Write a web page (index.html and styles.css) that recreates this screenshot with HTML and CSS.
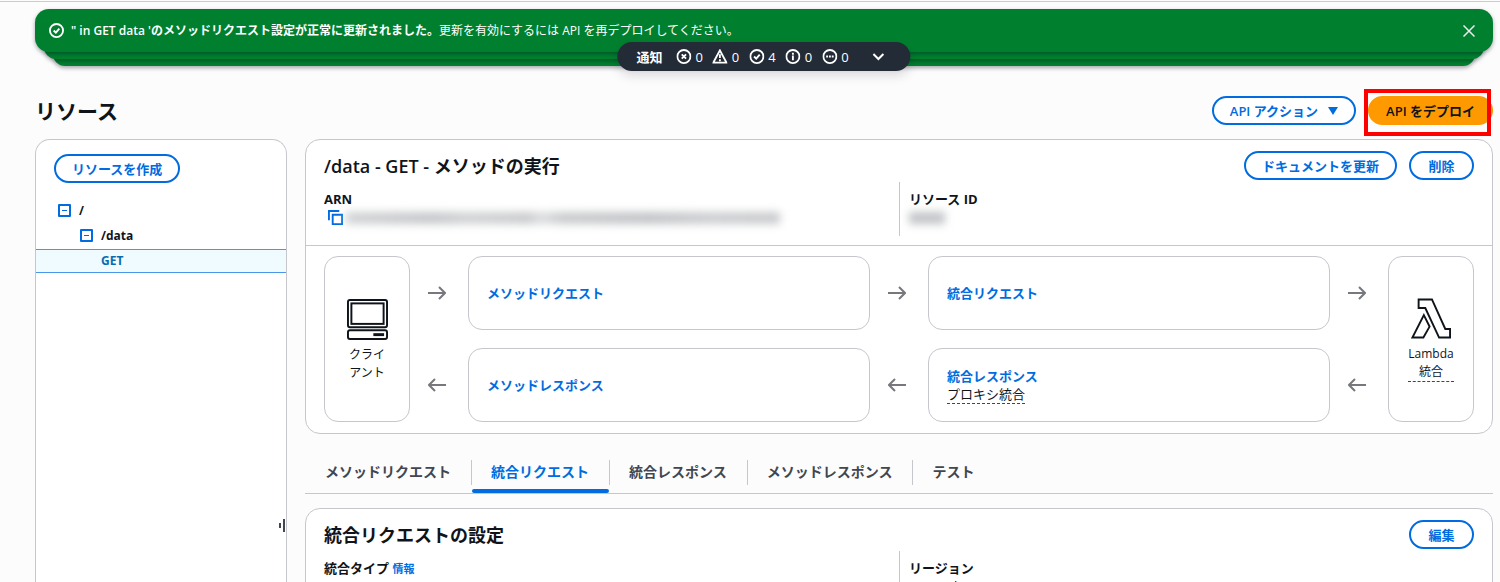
FILE: index.html
```
<!DOCTYPE html>
<html lang="ja">
<head>
  <meta charset="UTF-8">
  <meta name="viewport" content="width=device-width, initial-scale=1.0">
  <title>API Gateway - リソース</title>
  <link rel="stylesheet" href="styles.css">
</head>
<body>
  <div class="flashbar">
    <div class="flash">
      <svg class="icon" viewBox="0 0 16 16"><circle cx="8" cy="8" r="7"/><path d="M5 8l2.3 2.3L11 6"/></svg>
      <p><strong>" in GET data 'のメソッドリクエスト設定が正常に更新されました。</strong>更新を有効にするには API を再デプロイしてください。</p>
      <button class="close" aria-label="閉じる">
        <svg viewBox="0 0 12 12"><path d="M.5.5l11 11M11.5.5l-11 11"/></svg>
      </button>
    </div>
    <div class="flash-layer second"></div>
    <div class="flash-layer third"></div>
    <button class="notifications">
      <strong>通知</strong>
      <span class="counts">
        <span class="count"><svg class="icon" viewBox="0 0 16 16"><circle cx="8" cy="8" r="7"/><path d="M5.7 5.7l4.6 4.6M10.3 5.7l-4.6 4.6"/></svg>0</span>
        <span class="count"><svg class="icon" viewBox="0 0 16 16"><path d="M8 1.5L15 14.5H1zM8 5.5v4M8 11v2"/></svg>0</span>
        <span class="count"><svg class="icon" viewBox="0 0 16 16"><circle cx="8" cy="8" r="7"/><path d="M5 8l2.3 2.3L11 6"/></svg>4</span>
        <span class="count"><svg class="icon" viewBox="0 0 16 16"><circle cx="8" cy="8" r="7"/><path d="M8 7v5M8 4v2"/></svg>0</span>
        <span class="count"><svg class="icon" viewBox="0 0 16 16"><circle cx="8" cy="8" r="7"/><path d="M4 8h2M7 8h2M10 8h2"/></svg>0</span>
      </span>
      <svg class="chevron" viewBox="0 0 12 8"><path d="M1 1l5 5 5-5"/></svg>
    </button>
  </div>

  <header class="page-header">
    <h1>リソース</h1>
    <div class="actions">
      <button class="btn">API アクション <svg class="caret" viewBox="0 0 10 8"><path d="M0 0h10L5 8z"/></svg></button>
      <div class="highlight"><button class="btn primary">API をデプロイ</button></div>
    </div>
  </header>

  <div class="layout">
    <aside class="sidebar">
      <button class="btn create">リソースを作成</button>
      <ul class="tree">
        <li class="root">
          <button class="toggle" aria-label="/ を折りたたむ"></button>/
        </li>
        <li class="child">
          <button class="toggle" aria-label="/data を折りたたむ"></button>/data
        </li>
        <li class="selected"><a href="#get">GET</a></li>
      </ul>
      <div class="resize-handle"></div>
    </aside>

    <main class="content">
      <section class="panel">
        <div class="panel-header">
          <h2>/data - GET - メソッドの実行</h2>
          <div class="actions">
            <button class="btn">ドキュメントを更新</button>
            <button class="btn">削除</button>
          </div>
        </div>
        <div class="details">
          <div class="detail">
            <h3>ARN</h3>
            <div class="arn">
              <button class="copy" aria-label="ARN をコピー">
                <svg viewBox="0 0 16 16"><path d="M1 11V1h11"/><path d="M5 5h10v10H5z"/></svg>
              </button>
              <div class="masked"></div>
            </div>
          </div>
          <div class="detail">
            <h3>リソース ID</h3>
            <div class="masked short"></div>
          </div>
        </div>
        <div class="flow">
          <div class="endpoint">
            <svg class="endpoint-icon" viewBox="0 0 42 42">
              <rect x="1" y="1" width="40" height="28" rx="2"/>
              <rect x="4.5" y="4.5" width="33" height="21"/>
              <rect x="1" y="32" width="40" height="9" rx="2"/>
              <path class="drive" d="M27 36.5h11"/>
            </svg>
            <span>クライ<br>アント</span>
          </div>
          <svg class="arrow" viewBox="0 0 18 14"><path d="M0 7h17M11 1l6 6-6 6"/></svg>
          <div class="step"><a href="#method-request">メソッドリクエスト</a></div>
          <svg class="arrow" viewBox="0 0 18 14"><path d="M0 7h17M11 1l6 6-6 6"/></svg>
          <div class="step"><a href="#integration-request">統合リクエスト</a></div>
          <svg class="arrow" viewBox="0 0 18 14"><path d="M0 7h17M11 1l6 6-6 6"/></svg>
          <div class="endpoint">
            <svg class="endpoint-icon lambda" viewBox="0 0 42 42">
              <path d="M8 1h14l14 31h5v9H29.500L15 10H8z"/>
              <path d="M13.5 17.5l6 12L13 41H1.500z"/>
            </svg>
            <span class="hint">Lambda<br>統合</span>
          </div>
          <svg class="arrow back" viewBox="0 0 18 14"><path d="M0 7h17M11 1l6 6-6 6"/></svg>
          <div class="step"><a href="#method-response">メソッドレスポンス</a></div>
          <svg class="arrow back" viewBox="0 0 18 14"><path d="M0 7h17M11 1l6 6-6 6"/></svg>
          <div class="step">
            <a href="#integration-response">統合レスポンス</a>
            <span class="hint">プロキシ統合</span>
          </div>
          <svg class="arrow back" viewBox="0 0 18 14"><path d="M0 7h17M11 1l6 6-6 6"/></svg>
        </div>
      </section>

      <div class="tabs" role="tablist">
        <button class="tab" role="tab">メソッドリクエスト</button>
        <button class="tab active" role="tab" aria-selected="true">統合リクエスト</button>
        <button class="tab" role="tab">統合レスポンス</button>
        <button class="tab" role="tab">メソッドレスポンス</button>
        <button class="tab" role="tab">テスト</button>
      </div>

      <section class="panel">
        <div class="panel-header">
          <h2>統合リクエストの設定</h2>
          <button class="btn">編集</button>
        </div>
        <div class="details">
          <div class="detail">
            <h3>統合タイプ <a class="info" href="#info">情報</a></h3>
            <p>Lambda</p>
          </div>
          <div class="detail">
            <h3>リージョン</h3>
            <p>ap-northeast-1</p>
          </div>
        </div>
      </section>
    </main>
  </div>
</body>
</html>
```
FILE: styles.css
```
* {
  box-sizing: border-box;
}

body {
  margin: 0;
  height: 100vh;
  padding: 8px 7px 0 35px;
  display: flex;
  flex-direction: column;
  overflow: hidden;
  background: #fcfcfd;
  color: #0f141a;
  font-family: "Open Sans", "Noto Sans CJK JP", sans-serif;
  font-size: 13px;
  line-height: 18px;
}

body::before {
  content: "";
  position: absolute;
  top: 1px;
  left: 0;
  right: 0;
  height: 1px;
  background: #c9cecd;
}

h1, h2, h3, p, ul {
  margin: 0;
  padding: 0;
}

h1 {
  font-size: 21px;
  line-height: 28px;
}

h2 {
  font-size: 18px;
  line-height: 24px;
  font-weight: 600;
}

h3 {
  font-size: 13px;
  line-height: 18px;
}

a {
  color: #006ce0;
  font-weight: 700;
  text-decoration: none;
}

button {
  font: inherit;
  cursor: pointer;
}

svg {
  fill: none;
  stroke: currentColor;
  flex: none;
}

/* notifications */
.flashbar {
  position: relative;
  isolation: isolate;
  flex: none;
  padding-top: 1px;
}

.flash {
  position: relative;
  z-index: 3;
  display: flex;
  align-items: center;
  height: 43px;
  padding: 0 17px 0 14px;
  border-radius: 14px;
  background: #00802f;
  color: #fff;
  box-shadow: 0 2px 4px rgba(0, 7, 22, 0.35);
}

.flash p {
  flex: 1;
  margin-left: 7px;
  font-size: 12px;
}

.flash strong {
  font-weight: 600;
}

.flash-layer {
  position: relative;
  height: 24px;
  border-radius: 14px;
  background: #00802f;
  box-shadow: 0 2px 4px rgba(0, 7, 22, 0.35);
}

.second {
  z-index: 2;
  margin: -17px 9px 0;
}

.third {
  z-index: 1;
  margin: -17px 18px 0;
}

.icon {
  width: 15px;
  height: 15px;
  stroke-width: 2;
}

.close {
  display: flex;
  padding: 1px;
  border: none;
  background: none;
  color: #ebebf0;
}

.close svg {
  width: 12px;
  height: 12px;
  stroke-width: 1.5;
}

.notifications {
  position: absolute;
  z-index: 4;
  top: 34px;
  left: 50%;
  transform: translateX(-50%);
  display: flex;
  align-items: center;
  height: 29px;
  padding: 0 26px 0 19px;
  border: none;
  border-radius: 15px;
  background: #232b37;
  color: #fff;
  white-space: nowrap;
  box-shadow: 0 4px 12px rgba(0, 7, 22, 0.15);
}

.counts {
  display: flex;
  gap: 10px;
  margin: 0 24px 0 14px;
  font-weight: 500;
}

.count {
  display: flex;
  align-items: center;
  gap: 4px;
}

.chevron {
  width: 12px;
  height: 8px;
  stroke-width: 2;
}

/* buttons */
.btn {
  display: inline-flex;
  align-items: center;
  justify-content: center;
  gap: 10px;
  min-width: 65px;
  height: 29px;
  padding: 0 16px;
  border: 2px solid #006ce0;
  border-radius: 15px;
  background: #fff;
  color: #006ce0;
  font-weight: 600;
  white-space: nowrap;
}

.primary {
  border-color: #ff9900;
  background: #ff9900;
  color: #0f141a;
}

.caret {
  width: 10px;
  height: 8px;
  fill: currentColor;
  stroke: none;
}

.actions {
  display: flex;
  gap: 12px;
}

.highlight {
  position: relative;
  display: flex;
}

.highlight::after {
  content: "";
  position: absolute;
  inset: -7px 2px -11px -4px;
  border: 4px solid #ff0000;
  pointer-events: none;
}

.page-header {
  flex: none;
  display: flex;
  align-items: center;
  justify-content: space-between;
  margin: 30px 0 14px;
}

.layout {
  flex: 1;
  min-height: 0;
  display: flex;
  gap: 18px;
}

/* resource tree */
.sidebar {
  position: relative;
  flex: none;
  width: 252px;
  padding-top: 14px;
  border: 1px solid #c6c6cd;
  border-bottom: none;
  border-radius: 15px 15px 0 0;
  background: #fff;
}

.create {
  margin-left: 18px;
}

.tree {
  margin-top: 15px;
  list-style: none;
  font-size: 12px;
  font-weight: 700;
}

.tree li {
  display: flex;
  align-items: center;
  gap: 8px;
  height: 25px;
}

.root {
  padding-left: 22px;
}

.child {
  padding-left: 44px;
}

.tree .selected {
  margin-top: 1px;
  height: 24px;
  padding-left: 65px;
  border: solid #4a96e8;
  border-width: 1px 0;
  background: #f0fbff;
}

.selected a {
  color: #0b6aad;
}

.toggle {
  display: flex;
  align-items: center;
  justify-content: center;
  width: 13px;
  height: 13px;
  padding: 0;
  border: 2px solid #006ce0;
  border-radius: 1px;
  background: #fff;
}

.toggle::before {
  content: "";
  width: 5px;
  height: 1px;
  background: #006ce0;
}

.resize-handle {
  position: absolute;
  top: 379px;
  right: 1px;
  display: flex;
  align-items: center;
  gap: 2px;
}

.resize-handle::before,
.resize-handle::after {
  content: "";
  width: 2px;
  height: 5px;
  background: #424650;
}

.resize-handle::after {
  height: 13px;
}

/* panels */
.content {
  flex: 1;
  min-width: 0;
}

.panel {
  border: 1px solid #c6c6cd;
  border-radius: 15px;
  background: #fff;
}

.panel-header {
  display: flex;
  align-items: center;
  justify-content: space-between;
  padding: 11px 18px 2px;
}

.details {
  display: grid;
  grid-template-columns: 1fr 1fr;
  padding: 0 18px 9px;
}

.detail {
  min-height: 54px;
  padding-top: 8px;
}

.detail + .detail {
  padding-left: 9px;
  border-left: 1px solid #c6c6cd;
}

.arn {
  display: flex;
  align-items: center;
  padding-left: 4px;
}

.copy {
  display: flex;
  padding: 0;
  border: none;
  background: none;
  color: #006ce0;
}

.copy svg {
  width: 15px;
  height: 15px;
  stroke-width: 2;
}

.masked {
  width: 434px;
  height: 12px;
  margin: 4px 3px 2px;
  background: linear-gradient(90deg, #d0d2d4, #c4c6c9 20%, #d0d2d4 28%, #c8cacc 42%, #dcdddf 45%, #c8cacc 50%, #c1c3c6 70%, #cccdd0 84%, #c8cacc);
  filter: blur(4px);
}

.short {
  width: 36px;
  margin: 4px 0 2px;
  background: #c1c3c6;
}

.info {
  font-size: 11px;
}

/* execution diagram */
.flow {
  display: grid;
  grid-template-columns: 86px 58px 1fr 58px 1fr 58px 86px;
  grid-template-rows: 74px 74px;
  row-gap: 18px;
  padding: 10px 18px 11px;
  border-top: 1px solid #c6c6cd;
}

.endpoint,
.step {
  display: flex;
  flex-direction: column;
  justify-content: center;
  border: 1px solid #c6c6cd;
  border-radius: 14px;
}

.endpoint {
  grid-row: span 2;
  align-items: center;
  gap: 6px;
  padding-top: 2px;
  text-align: center;
  font-size: 12px;
}

.endpoint-icon {
  width: 41px;
  height: 41px;
  stroke-width: 2;
}

.drive {
  stroke-width: 3;
}

.lambda {
  width: 40px;
}

.step {
  align-items: flex-start;
  padding: 0 18px;
}

.hint {
  border-bottom: 1px dashed #424650;
}

.arrow {
  width: 18px;
  height: 14px;
  margin-right: 4px;
  place-self: center;
  color: #76787d;
  stroke-width: 2;
}

.back {
  transform: rotate(180deg);
}

/* tabs */
.tabs {
  display: flex;
  margin: 18px 0 14px;
  border-bottom: 1px solid #c6c6cd;
}

.tab {
  position: relative;
  height: 41px;
  padding: 0 20px 2px;
  border: none;
  background: none;
  color: #424650;
  font-size: 14px;
  font-weight: 700;
}

.tab + .tab::before {
  content: "";
  position: absolute;
  top: 8px;
  left: 0;
  width: 1px;
  height: 25px;
  background: #c6c6cd;
}

.active {
  color: #006ce0;
}

.active::after {
  content: "";
  position: absolute;
  left: 1px;
  right: 0;
  bottom: 0;
  height: 4px;
  border-radius: 2px;
  background: #006ce0;
}
```
